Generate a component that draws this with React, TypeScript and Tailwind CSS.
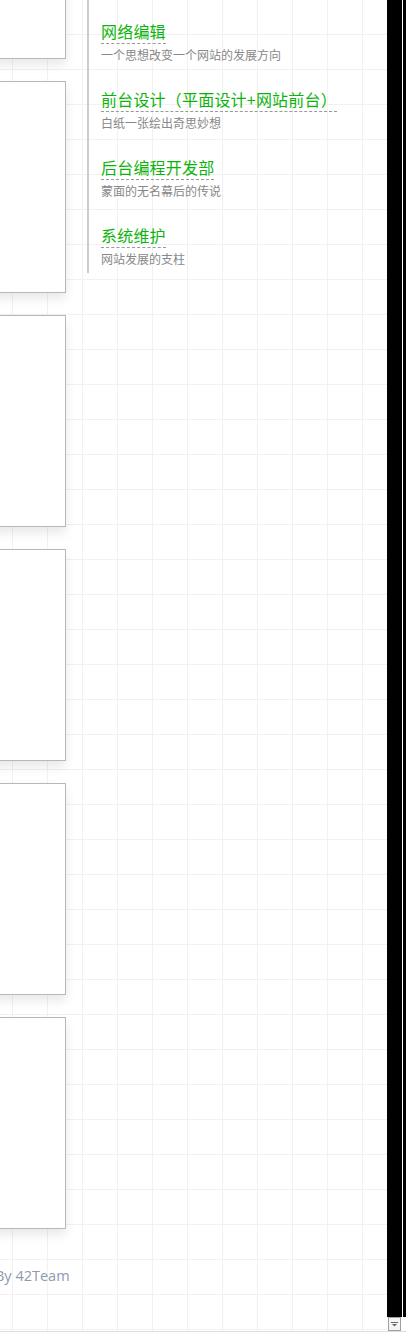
import React from "react";

const items = [
  { title: "网络编辑", sub: "一个思想改变一个网站的发展方向" },
  { title: "前台设计（平面设计+网站前台）", sub: "白纸一张绘出奇思妙想" },
  { title: "后台编程开发部", sub: "蒙面的无名幕后的传说" },
  { title: "系统维护", sub: "网站发展的支柱" },
];

export default function App() {
  return (
    <div className="w-[406px] h-[1333px] overflow-hidden bg-white flex flex-col font-['Noto_Sans_CJK_SC',sans-serif]">
      <div className="flex h-[1331px]">
        <div className="w-[387px] h-full flex bg-[image:linear-gradient(to_right,#f1f1f1_1px,transparent_1px),linear-gradient(to_bottom,#f1f1f1_1px,transparent_1px)] bg-[size:35px_35px] bg-[position:12px_34px]">
          {/* cards column */}
          <div className="w-[66px] shrink-0 flex flex-col">
            <div className="flex flex-col gap-[22px] mt-[-153px] ml-[-234px] w-[300px]">
              {[0, 1, 2, 3, 4, 5].map((i) => (
                <div
                  key={i}
                  className="h-[212px] bg-white border border-[#b8b8b8] shadow-[0_6px_10px_rgba(0,0,0,0.09)]"
                />
              ))}
            </div>
            <div className="mt-[37px] ml-[-5px] whitespace-nowrap text-[14.5px] leading-[20px] text-[#8d9bad] font-['Open_Sans','Liberation_Sans',sans-serif]">
              By 42Team
            </div>
          </div>
          {/* vertical rule */}
          <div className="ml-[21px] w-[2px] h-[273px] bg-[#cccccc] shrink-0" />
          {/* text list */}
          <div className="ml-[12px] pt-[20px] flex flex-col gap-[24px]">
            {items.map((it) => (
              <div key={it.title} className="flex flex-col items-start">
                <div className="text-[16px] leading-[22px] pb-[1px] text-[#0bb40b] border-b border-dashed border-[#999] whitespace-nowrap tracking-[0.2px]">
                  {it.title}
                </div>
                <div className="mt-[2px] text-[12px] leading-[18px] text-[#888] whitespace-nowrap">
                  {it.sub}
                </div>
              </div>
            ))}
          </div>
        </div>
        {/* scrollbar */}
        <div className="w-[19px] h-full flex flex-col">
          <div className="flex-1 flex">
            <div className="w-[15px] bg-black" />
            <div className="w-[1px] bg-white" />
            <div className="w-[3px] bg-black" />
          </div>
          <div className="h-[14px] flex">
            <div className="ml-[1px] w-[13px] h-[14px] border border-[#a0a0a0] bg-[#f4f4f4] flex items-center justify-center">
              <svg width="7" height="5" viewBox="0 0 7 5">
                <rect x="0" y="0" width="7" height="1" fill="#666" />
                <polygon points="1,2 6,2 3.5,4.5" fill="#666" />
              </svg>
            </div>
          </div>
        </div>
      </div>
      <div className="h-[1px] bg-[#dddddd]" />
      <div className="h-[1px] bg-white" />
    </div>
  );
}
